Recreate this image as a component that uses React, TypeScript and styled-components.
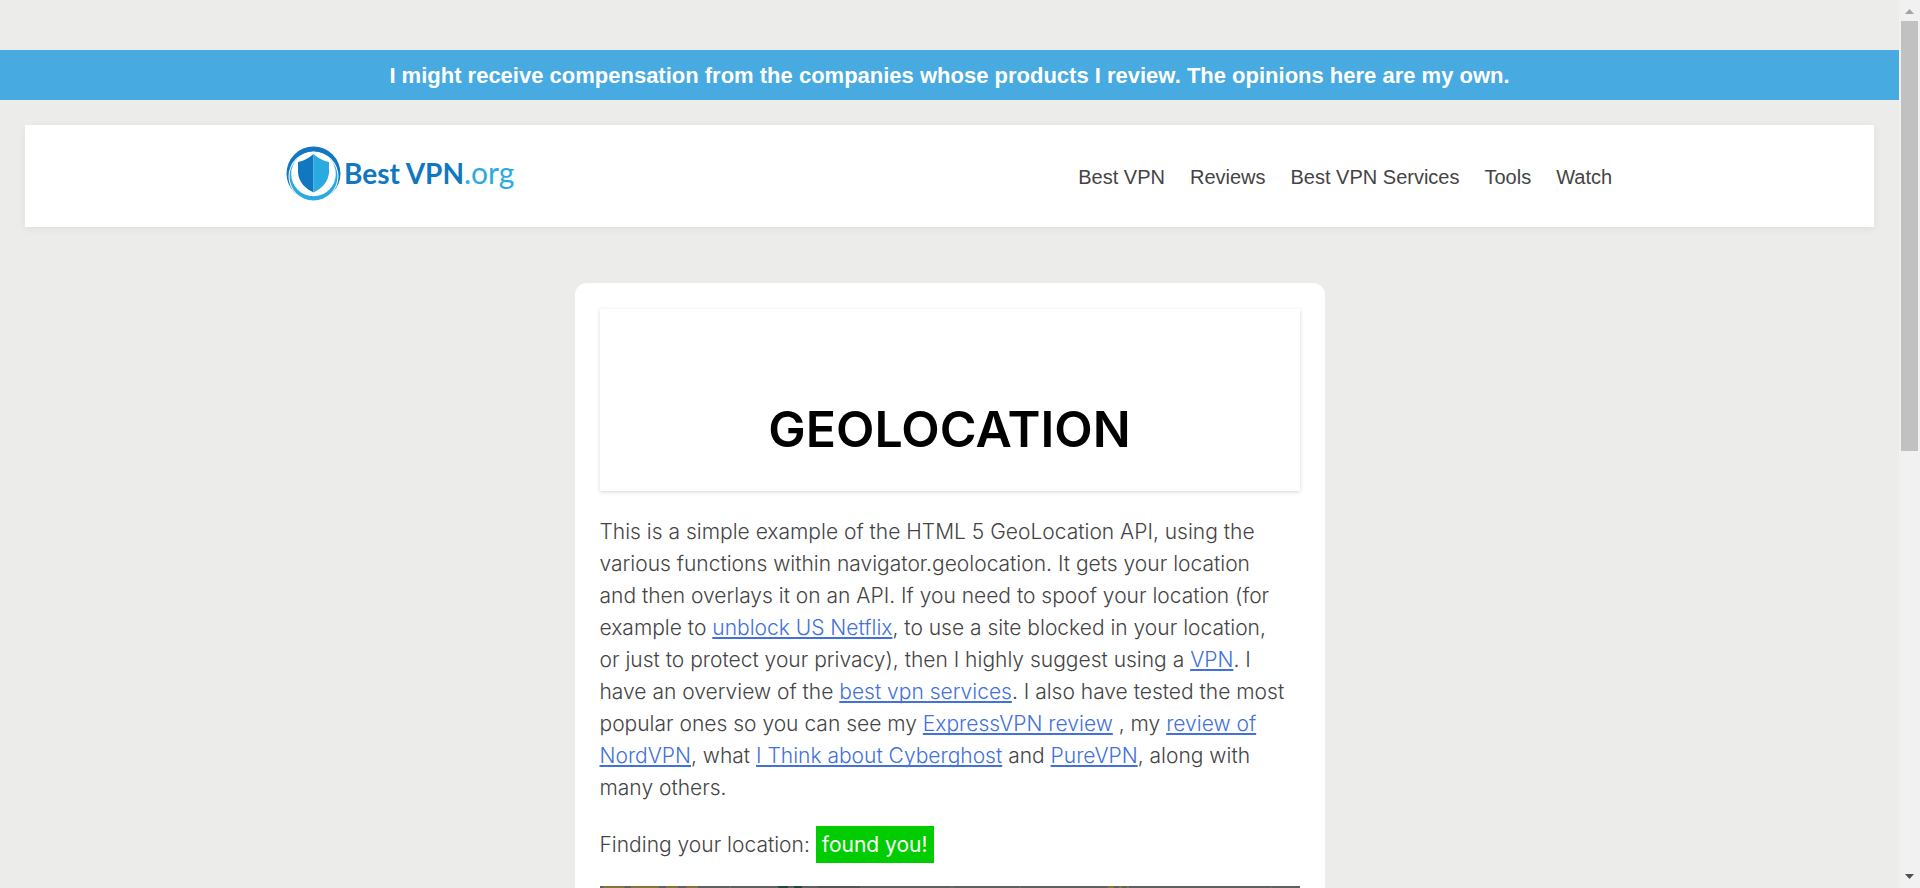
import React from "react";
import styled, { createGlobalStyle } from "styled-components";

const GlobalStyle = createGlobalStyle`
  *, *::before, *::after { box-sizing: border-box; }
  body {
    margin: 0;
    background: #ececea;
    color: #444;
    font-family: "Liberation Sans", Arial, sans-serif;
  }
`;

const Shell = styled.div`
  display: flex;
  height: 100vh;
`;

const Page = styled.div`
  flex: 1;
  min-width: 0;
  overflow-y: auto;
  scrollbar-width: none;
  padding-top: 50px;
`;

const Banner = styled.aside`
  padding: 13px 24px 11px;
  background: #47aae1;
  color: #fff;
  font-size: 22px;
  font-weight: 700;
  line-height: 26px;
  text-align: center;
`;

const Header = styled.header`
  margin: 25px 25px 56px;
  background: #fff;
  box-shadow: 0 2px 8px rgba(0, 0, 0, 0.06);
`;

const HeaderInner = styled.div`
  display: flex;
  align-items: center;
  justify-content: space-between;
  width: 72%;
  min-height: 102px;
  margin: 0 auto;
  padding: 0 3px 0 2px;
`;

const LogoLink = styled.a`
  display: block;
  margin-bottom: 4px;
`;

const LogoArt = styled.svg`
  display: block;
  width: 236px;
  height: 56px;
  font-family: Lato, sans-serif;
`;

const Menu = styled.nav`
  display: flex;
  gap: 25px;
  padding-top: 2px;
`;

const MenuLink = styled.a`
  color: #444;
  font-size: 20px;
  line-height: 24px;
  text-decoration: none;
`;

const Card = styled.main`
  width: 750px;
  max-width: 100%;
  margin: 0 auto;
  padding: 26px 25px;
  border-radius: 12px;
  background: #fff;
  font-family: Inter, sans-serif;
`;

const TitleBox = styled.div`
  padding: 90px 24px 32px;
  box-shadow: 0 1px 4px rgba(0, 0, 0, 0.16);
`;

const Title = styled.h1`
  margin: 0;
  color: #000;
  font-size: 50px;
  font-weight: 600;
  line-height: 60px;
  text-align: center;
  text-transform: uppercase;
`;

const Text = styled.p`
  margin: 25px 0;
  font-size: 21px;
  font-weight: 300;
  line-height: 32px;
`;

const TextLink = styled.a`
  color: #4271dc;
  text-decoration: underline;
  text-decoration-thickness: 2px;
  text-underline-offset: 2px;
  text-decoration-skip-ink: none;
`;

const Status = styled.span`
  padding: 6px;
  background: #00cd00;
  color: #fff;
  font-weight: 400;
`;

const MapArt = styled.svg`
  display: block;
  width: 100%;
  height: 400px;
`;

const ScrollTrack = styled.div`
  display: flex;
  flex-direction: column;
  justify-content: space-between;
  align-items: center;
  width: 21px;
  background: #f1f1f1;
`;

const ScrollThumb = styled.div`
  flex: 0 0 calc((100% - 42px) * 0.508);
  width: 17px;
  margin-bottom: auto;
  background: #c1c1c1;
`;

const ScrollArrow = styled.svg`
  display: block;
  flex: none;
  width: 21px;
  height: 21px;
`;

const menuItems = ["Best VPN", "Reviews", "Best VPN Services", "Tools", "Watch"];

function Logo() {
  return (
    <LogoArt viewBox="0 0 236 56" role="img" aria-label="Best VPN.org">
      <circle cx="27.500" cy="27.500" r="27" fill="#1077c0" />
      <circle cx="27.500" cy="30.500" r="25" fill="#fff" />
      <circle cx="27.500" cy="30.500" r="24" fill="#29abe2" />
      <circle cx="27.500" cy="28" r="22.300" fill="#fff" />
      <path d="M27.500 8C22.500 12.500 17.500 15 12 16V26.500C12.500 35.500 19 42.500 27.500 46.500Z" fill="#1077c0" />
      <path d="M27.500 8C32.500 12.500 37.500 15 43 16V26.500C42.500 35.500 36 42.500 27.500 46.500Z" fill="#29abe2" />
      <text x="58" y="38" fontSize="28" fontWeight="700" fill="#1077c0">
        Best VPN
      </text>
      <text x="178" y="38" fontSize="30" fontWeight="400" fill="#29abe2">
        .org
      </text>
    </LogoArt>
  );
}

function LocationMap() {
  return (
    <MapArt viewBox="0 0 700 400" preserveAspectRatio="xMidYMin slice" role="img" aria-label="Map of your location">
      <rect width="700" height="400" fill="#5f6064" />
      <path d="M4 0H26L16 6H0ZM31 0H59V12H31ZM66 0H78V12H62ZM86 0H98V12H90Z" fill="#857538" />
      <path d="M178 0H188V14H182ZM194 0H202V14H194Z" fill="#24453a" />
      <path d="M508 0H514V14H504ZM519 0H522V14H519ZM527 0H529V14H527Z" fill="#857538" />
      <path d="M218 0H260V2H218Z" fill="#46474a" opacity="0.500" />
      <path d="M130 0V400M352 0V400M420 0V400M671 0V400M0 90H700M0 230H700" stroke="#74757a" />
    </MapArt>
  );
}

export default function App() {
  return (
    <>
      <GlobalStyle />
      <Shell>
        <Page>
          <Banner>
            I might receive compensation from the companies whose products I review. The opinions here are my own.
          </Banner>
          <Header>
            <HeaderInner>
              <LogoLink href="#home">
                <Logo />
              </LogoLink>
              <Menu aria-label="Main">
                {menuItems.map((item) => (
                  <MenuLink key={item} href="#menu">
                    {item}
                  </MenuLink>
                ))}
              </Menu>
            </HeaderInner>
          </Header>
          <Card>
            <TitleBox>
              <Title>Geolocation</Title>
            </TitleBox>
            <Text>
              This is a simple example of the HTML 5 GeoLocation API, using the
              <br />
              various functions within navigator.geolocation. It gets your location
              <br />
              and then overlays it on an API. If you need to spoof your location (for
              <br />
              example to <TextLink href="#netflix">unblock US Netflix</TextLink>, to use a site blocked in your location,
              <br />
              or just to protect your privacy), then I highly suggest using a <TextLink href="#vpn">VPN</TextLink>. I
              <br />
              have an overview of the <TextLink href="#services">best vpn services</TextLink>. I also have tested the most
              <br />
              popular ones so you can see my <TextLink href="#expressvpn">ExpressVPN review</TextLink> , my{" "}
              <TextLink href="#nordvpn">
                review of
                <br />
                NordVPN
              </TextLink>
              , what <TextLink href="#cyberghost">I Think about Cyberghost</TextLink> and{" "}
              <TextLink href="#purevpn">PureVPN</TextLink>, along with
              <br />
              many others.
            </Text>
            <Text>
              Finding your location: <Status>found you!</Status>
            </Text>
            <LocationMap />
          </Card>
        </Page>
        <ScrollTrack aria-hidden="true">
          <ScrollArrow viewBox="0 0 21 21">
            <path d="M6 14L10.500 9L15 14Z" fill="#a3a3a3" />
          </ScrollArrow>
          <ScrollThumb />
          <ScrollArrow viewBox="0 0 21 21">
            <path d="M6 7L10.500 12L15 7Z" fill="#505050" />
          </ScrollArrow>
        </ScrollTrack>
      </Shell>
    </>
  );
}
